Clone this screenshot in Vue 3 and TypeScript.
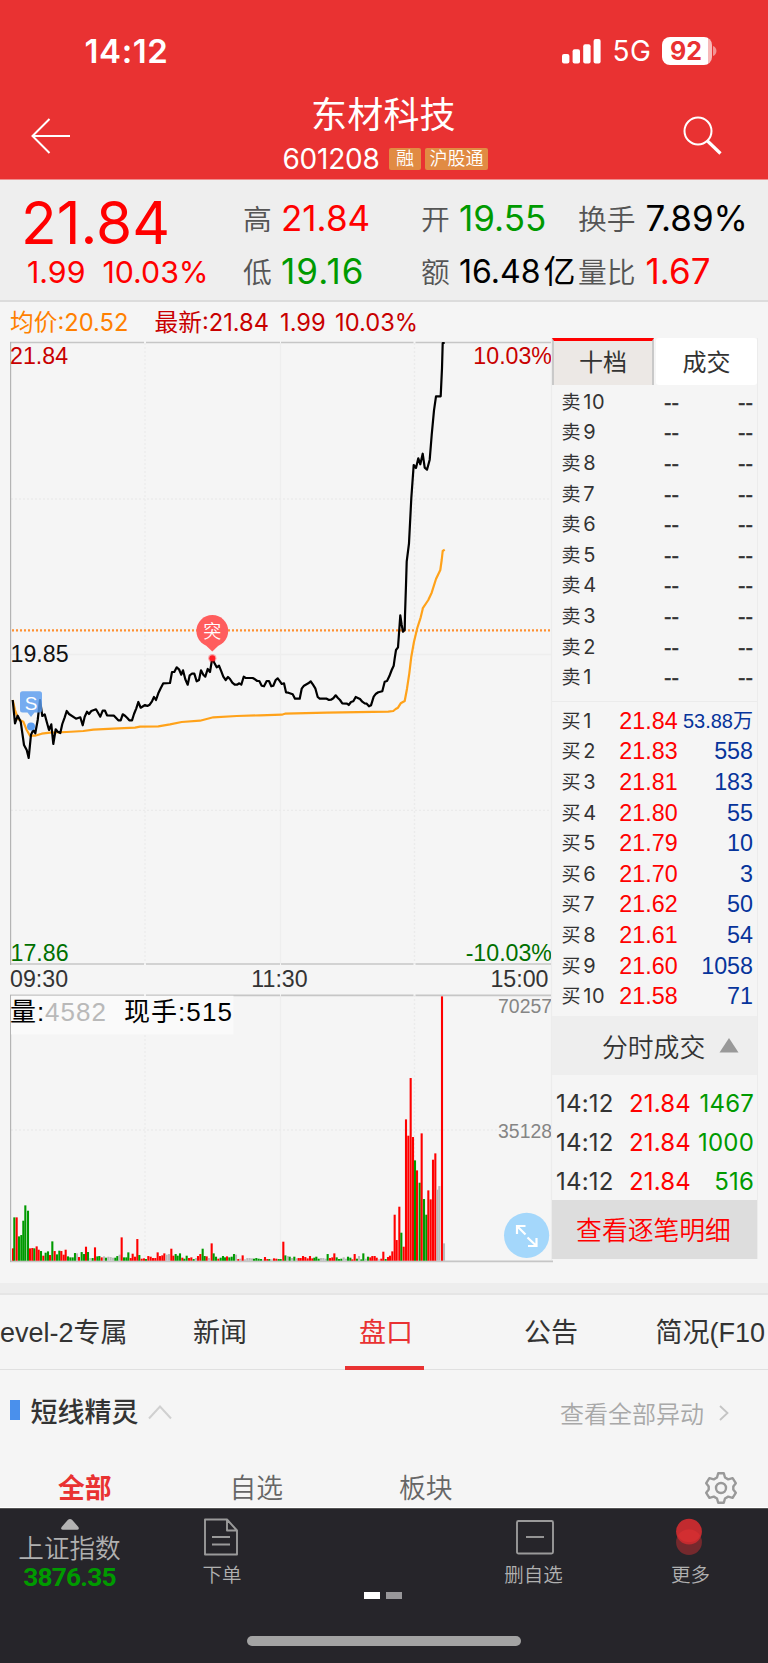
<script setup lang="ts">
interface Level { label: string; price: string; qty: string }
interface Bar { x: number; h: number; color: string }

const asks: Level[] = Array.from({ length: 10 }, (_, i) => ({ label: String(10 - i), price: '--', qty: '--' }))

const bids: Level[] = [
  ['21.84', '53.88万'], ['21.83', '558'], ['21.81', '183'], ['21.80', '55'], ['21.79', '10'],
  ['21.70', '3'], ['21.62', '50'], ['21.61', '54'], ['21.60', '1058'], ['21.58', '71'],
].map(([price, qty], i) => ({ label: String(i + 1), price, qty }))

const ticks = [
  { time: '14:12', price: '21.84', qty: '1467' },
  { time: '14:12', price: '21.84', qty: '1000' },
  { time: '14:12', price: '21.84', qty: '516' },
]

// Samples are stored in thirds of a pixel, relative to the origin of each session segment
function trace(originX: number, originY: number, samples: string): string {
  return samples
    .split(' ')
    .map(pair => {
      const [x, y] = pair.split(',').map(Number)
      return `${(originX + x / 3).toFixed(1)},${(originY + y / 3).toFixed(1)}`
    })
    .join(' ')
}

const priceLine = [
  trace(0, 600, '38,300 45,370 53,347 62,365 72,435 80,450 86,474 93,404 100,390 106,400 113,360 120,300 127,348 134,343 140,365 147,390 154,373 160,432 167,388 173,395 181,399 187,372 194,352 200,333 207,342 228,356 241,352 248,376 254,350 261,335 267,342 274,333 288,328 295,340 301,350 308,332 315,332 321,346 342,347 355,361 362,361 368,343 375,347 382,354 388,361 396,361 402,342 409,325 415,306 422,323 435,315 442,318 449,314 456,304 462,291 468,300 475,280 482,265 490,250 510,249 516,216 523,216 530,202 537,208 544,224 549,211 556,238 563,254 569,226 576,221 583,221 590,244 597,240 603,211 610,224 616,230 623,207 630,216 637,174 643,188 650,202 657,197 664,214 670,230 677,240 684,231 690,237 697,248 704,254 711,254 718,250 724,254 731,230 737,234 758,234 765,238 772,243 778,243 785,257 792,259 800,243 807,243 814,259 820,257 827,240 833,235'),
  trace(260, 600, '60,244 65,252 72,250 78,277 85,278 98,283 105,296 119,296 125,266 132,257 145,250 152,244 159,254 166,265 173,291 179,296 200,296 207,300 213,299 220,295 227,286 233,293 240,300 247,310 261,311 266,315 273,306 280,304 287,291 300,297 307,305 314,310 320,311 327,319 333,316 341,290 348,281 355,277 367,274 374,245 381,243 388,229 395,210 401,197 404,175 408,150 414,142 421,46 425,75 429,95 434,90'),
  trace(380, 335, '75,840 78,750 80,680 87,625 94,490 101,390 108,399 115,370 121,388 128,356 134,398 141,404 149,374 155,300 162,226 168,184 182,184 186,100 188,24 194,24'),
].join(' ')

const averageLine = [
  trace(0, 600, '38,300 45,330 55,358 70,365 80,390 90,407 105,407 125,401 150,398 200,396 250,393 280,389 340,386 405,383 420,380 475,379 510,373 545,366 600,362 640,352 710,348 780,346'),
  trace(260, 600, '0,346 65,344 75,341 200,338 385,335 400,333 407,327 414,323 422,310 434,303 441,266 448,220 454,170 462,125 472,84 482,52 488,27'),
  trace(380, 335, '128,820 145,795 155,773 168,732 181,705 185,675 188,648 194,644'),
].join(' ')

const palette: Record<string, string> = { r: '#ff0000', g: '#009a00', n: '#b9b9b9' }

function toBars(originX: number, data: string): Bar[] {
  return data.split(' ').map(item => {
    const [x, rest] = item.split(':')
    return { x: originX + Number(x) / 3, h: parseInt(rest) / 3, color: palette[rest.slice(-1)] }
  })
}

const bars: Bar[] = [
  ...toBars(0, '39:37r 43:130g 50:130r 57:73g 64:77g 70:120g 76:166g 84:150g 90:37r 97:38r 103:37g 110:43r 116:33r 123:29g 130:15r 137:24g 144:28g 150:17r 157:58g 164:29r 171:19g 178:30g 184:29r 191:18r 197:33r 204:13g 211:10g 218:10g 225:23g 231:22n 237:11r 245:26g 252:20g 258:42r 264:26g 271:8n 278:8g 285:40r 292:13g 298:14g 305:10r 312:13n 318:9g 325:12n 332:11n 339:9n 346:9g 352:14g 359:18n 365:70r 372:10g 379:10g 385:25g 392:8r 398:21r 405:12r 412:65r 418:17g 425:6r 432:7r 438:5g 445:14r 452:12r 459:8r 466:8r 473:25r 480:14r 487:16r 493:22r 500:18n 507:20n 514:36r 520:15r 527:20g 533:15g 540:22g 547:9r 553:6g 560:15g 567:8r 574:10r 581:5g 588:8n 594:14r 601:20r 608:36g 614:14g 620:13r 627:8n 635:52r 641:22g 648:12g 655:6r 662:9g 669:14g 675:10g 681:13r 688:10g 695:12g 702:20g 708:18n 715:5r 721:6n 728:16r 735:4n 742:8n 749:8n 756:7n 762:6g 769:8g 776:6g 783:5g 790:4n 795:11r 802:5r 808:5g 815:4n 822:7r 829:6r 836:5g'),
  ...toBars(270, '32:5g 40:57r 46:16g 53:14n 59:12g 66:8n 73:12g 80:7n 86:8r 92:8r 99:14r 106:11r 113:7r 120:14r 127:7r 133:9g 139:12g 146:6g 153:8n 160:8n 167:6n 173:20g 180:8r 187:10r 193:22r 200:10g 207:5g 214:6g 221:10n 228:6n 234:12g 241:9g 247:4r 254:20r 261:6g 267:14n 274:4g 280:22g 287:6n 294:12g 301:10r 307:14r 314:14r 320:9r 327:4n 334:6r 340:27r 347:5g 354:11r 360:15r 367:28r 374:138r 380:62r 388:162r 394:84g 401:42r 408:424r 415:375r 422:548r 429:371r 435:301g 441:271r 449:234g 455:382r 462:185g 469:138g 475:211r 482:184r 489:303r 496:322r 502:213n 508:224n 516:793r 522:52n'),
]
</script>

<template>
  <main class="app">
    <header class="top">
      <div class="status">
        <span class="clock">14:12</span>
        <svg class="signal" width="40" height="25" viewBox="0 0 40 25" fill="#fff">
          <rect x="0" y="15" width="7.4" height="9.4" rx="2" />
          <rect x="10.6" y="10.3" width="7.4" height="14.1" rx="2" />
          <rect x="21.2" y="5.2" width="7.4" height="19.2" rx="2" />
          <rect x="31.6" y="0" width="7" height="24.4" rx="2" />
        </svg>
        <span class="net">5G</span>
        <div class="battery"><span>92</span></div>
        <svg class="cap" width="4" height="10" viewBox="0 0 4 10"><path d="M0 0C4.6 1.4 4.6 8.6 0 10Z" fill="#f29494" /></svg>
      </div>
      <div class="nav">
        <svg width="42" height="38" viewBox="0 0 42 38" fill="none" stroke="#fff" stroke-width="2">
          <path d="M18.5 2L1.5 19L18.5 36M1.5 19H39" />
        </svg>
        <div class="title">
          <h1>东材科技</h1>
          <div class="code">
            <span class="num">601208</span>
            <span class="tag one">融</span>
            <span class="tag">沪股通</span>
          </div>
        </div>
        <svg class="search" width="40" height="40" viewBox="0 0 40 40" fill="none" stroke="#fff">
          <circle cx="15" cy="15" r="13.5" stroke-width="2" />
          <path d="M24.5 25L37.5 37.5" stroke-width="3.2" />
        </svg>
      </div>
    </header>

    <section class="quote">
      <div class="last">
        <div class="big">21.84</div>
        <div class="change"><span>1.99</span><span>10.03%</span></div>
      </div>
      <div class="pair hi">
        <p><label>高</label><b class="up">21.84</b></p>
        <p><label>低</label><b class="down wide">19.16</b></p>
      </div>
      <div class="pair open">
        <p><label>开</label><b class="down">19.55</b></p>
        <p><label>额</label><b class="amount">16.48<i>亿</i></b></p>
      </div>
      <div class="pair turn">
        <p><label>换手</label><b>7.89%</b></p>
        <p><label>量比</label><b class="up">1.67</b></p>
      </div>
    </section>

    <div class="legend">
      <span class="avg">均价:20.52</span>
      <span class="new">最新:21.84</span>
      <span class="new d">1.99</span>
      <span class="new">10.03%</span>
    </div>

    <section class="market">
      <svg class="chart" width="553" height="945" viewBox="0 338 553 945">
        <g stroke="#ebebeb" stroke-width="1.3" fill="none">
          <path d="M280.5 343V964M280.5 995V1260M551.5 343V1260M11 654.5H552" stroke="#eeeeee" />
          <path d="M145 343V964M414.5 343V964M145 995V1260M414.5 995V1260M11 499H552M11 810.3H552M11 1130H500" stroke-dasharray="2 2" />
        </g>
        <g stroke="#c6c6c6" stroke-width="1.7">
          <path d="M10 342.5H144M146 342.5H280M281 342.5H413.5M415.5 342.5H552" />
          <path d="M10 964H144M146 964H280M281 964H413.5M415.5 964H552" />
          <path d="M10 995.3H144M146 995.3H280M281 995.3H413.5M415.5 995.3H552M10 1261.3H553" />
          <path d="M10.6 342V965M10.6 995V1262" stroke="#b4b4b4" stroke-width="1.2" />
        </g>

        <rect x="11" y="995.8" width="222.5" height="38.6" fill="#fafafa" />
        <rect v-for="(bar, i) in bars" :key="i" :x="bar.x - 1.05" :y="1260.7 - bar.h" width="2.1" :height="bar.h" :fill="bar.color" />

        <path d="M12 630.3H550" stroke="#ff9030" stroke-width="2.3" stroke-dasharray="2 2" />
        <polyline :points="averageLine" fill="none" stroke="#ffa21a" stroke-width="2.2" stroke-linejoin="round" />
        <polyline :points="priceLine" fill="none" stroke="#000" stroke-width="2.2" stroke-linejoin="round" />

        <g class="marker">
          <path d="M22.5 691.3H39.5Q42 691.3 42 693.8V710Q42 712.5 39.5 712.5H34.5L31 717L27.5 712.5H22.5Q20 712.5 20 710V693.8Q20 691.3 22.5 691.3Z" fill="#5a9cef" fill-opacity=".82" />
          <circle cx="31" cy="726.5" r="4" fill="#5a9cef" />
          <text x="31" y="709.6" font-size="19" text-anchor="middle">S</text>
          <path d="M206 645.5L212.3 651.5L218.6 645.5Z" fill="#ff5d5d" />
          <circle cx="212.3" cy="631" r="15.9" fill="#ff5d5d" />
          <circle cx="212.3" cy="658.3" r="4.2" fill="#ff1d25" fill-opacity=".35" />
          <circle cx="212.3" cy="658.3" r="3" fill="#ff1d25" />
          <text x="212.3" y="637.8" class="tu" text-anchor="middle">突</text>
        </g>

        <g class="axis">
          <text x="10" y="363.5" class="red">21.84</text>
          <text x="552" y="364" class="red" text-anchor="end">10.03%</text>
          <text x="10.5" y="662">19.85</text>
          <text x="10.5" y="960.5" class="green">17.86</text>
          <text x="552" y="960.5" class="green" text-anchor="end">-10.03%</text>
          <text x="10" y="987.3" class="time">09:30</text>
          <text x="279.5" y="987.3" class="time" text-anchor="middle">11:30</text>
          <text x="548.5" y="987.3" class="time" text-anchor="end">15:00</text>
        </g>
        <g class="volume">
          <text x="10" y="1020.5">量:</text>
          <text x="45" y="1020.5" class="faint">4582</text>
          <text x="124" y="1020.5">现手:515</text>
        </g>
        <g class="scale">
          <text x="552" y="1013.3" text-anchor="end">70257</text>
          <text x="552" y="1137.6" text-anchor="end">35128</text>
        </g>

        <circle cx="526.6" cy="1235.3" r="22.6" fill="#a4d7fb" />
        <path d="M517 1234V1226H525.5M517.5 1226.5L525.5 1234.5M536.5 1238V1246H528M536 1245.5L527.5 1237.5" fill="none" stroke="#fff" stroke-width="2.2" />
      </svg>

      <aside class="book">
        <div class="switch"><span class="on">十档</span><span>成交</span></div>
        <ul class="asks">
          <li v-for="row in asks" :key="row.label"><span>卖<em>{{ row.label }}</em></span><s>{{ row.price }}</s><u>{{ row.qty }}</u></li>
        </ul>
        <ul class="bids">
          <li v-for="row in bids" :key="row.label">
            <span>买<em>{{ row.label }}</em></span><s>{{ row.price }}</s><u :class="{ small: row.qty.endsWith('万') }">{{ row.qty }}</u>
          </li>
        </ul>
        <div class="fold">分时成交<svg width="20" height="15" viewBox="0 0 20 15"><path d="M10 0L19.5 14.5H.5Z" fill="#999" /></svg></div>
        <ul class="ticks">
          <li v-for="(t, i) in ticks" :key="i"><span>{{ t.time }}</span><s>{{ t.price }}</s><u>{{ t.qty }}</u></li>
        </ul>
        <div class="detail">查看逐笔明细</div>
      </aside>
    </section>

    <div class="band"></div>
    <nav class="tabs">
      <span class="t1">evel-2专属</span>
      <span class="t2">新闻</span>
      <span class="t3 on">盘口</span>
      <span class="t4">公告</span>
      <span class="t5">简况(F10</span>
    </nav>

    <section class="genie">
      <div class="head">
        <i></i>
        <h2>短线精灵</h2>
        <svg width="24" height="15" viewBox="0 0 24 15" fill="none" stroke="#d0d0d0" stroke-width="2"><path d="M1 13.5L12 1.5L23 13.5" /></svg>
        <span class="all">查看全部异动</span>
        <svg class="chev" width="10" height="16" viewBox="0 0 10 16" fill="none" stroke="#c4c4c4" stroke-width="1.8"><path d="M1 1L8.5 8L1 15" /></svg>
      </div>
      <div class="filters">
        <span class="on">全部</span><span>自选</span><span>板块</span>
        <svg width="34" height="34" viewBox="0 0 34 34" fill="none" stroke="#999" stroke-width="2.4" stroke-linejoin="round">
          <path d="M14.2 2.2H19.8L21 6.5L24.2 8.4L28.6 7.2L31.8 12.2L29.3 15.4V18.6L31.8 21.8L28.6 26.8L24.2 25.6L21 27.5L19.8 31.8H14.2L13 27.5L9.8 25.6L5.4 26.8L2.2 21.8L4.7 18.6V15.4L2.2 12.2L5.4 7.2L9.8 8.4L13 6.5Z" />
          <circle cx="17" cy="17" r="5" />
        </svg>
      </div>
    </section>

    <footer class="bottom">
      <div class="actions">
        <div class="index">
          <svg width="18" height="11" viewBox="0 0 18 11"><path d="M7 .8Q9-.8 11 .8L17.4 8Q18.6 10.8 16 10.8H2Q-.6 10.8 .6 8Z" fill="#b3b3b3" /></svg>
          <span>上证指数</span>
          <b>3876.35</b>
        </div>
        <div class="act order">
          <svg width="36" height="38" viewBox="0 0 36 38" fill="none" stroke="#9a9a9a" stroke-width="1.9" stroke-linejoin="round">
            <path d="M2 1.5H24L34 12.5V36.5H2ZM24 1.5V12.5H34M9 19H27M9 26.5H27" />
          </svg>
          <span>下单</span>
        </div>
        <div class="act remove">
          <svg width="38" height="38" viewBox="0 0 38 38" fill="none" stroke="#9a9a9a" stroke-width="1.9">
            <rect x="1" y="3" width="36" height="32.5" rx="1.5" /><path d="M10 19H28" />
          </svg>
          <span>删自选</span>
        </div>
        <div class="act more">
          <svg width="28" height="38" viewBox="0 0 28 38">
            <circle cx="14" cy="24.2" r="12.9" fill="#75292d" />
            <circle cx="14" cy="13.6" r="12.9" fill="#c22b2f" />
            <path d="M2.8 17.8A12.9 12.9 0 0 1 25.2 17.8A12.9 12.9 0 0 1 2.8 17.8Z" fill="#d22e31" />
          </svg>
          <span>更多</span>
        </div>
      </div>
      <div class="pages"><i class="on"></i><i></i></div>
      <div class="home"></div>
    </footer>
  </main>
</template>

<style>
body { background: #f5f5f5; }
</style>

<style scoped>
.app {
  width: 768px; height: 1663px; overflow: hidden; background: #f5f5f5; color: #333;
  font-family: Inter, "Noto Sans CJK SC", sans-serif; display: flex; flex-direction: column;
}
.app * { box-sizing: border-box; }
h1, h2, p, ul { margin: 0; padding: 0; font-weight: 400; }
ul { list-style: none; }
b, i, em { font-style: normal; font-weight: 400; }
s, u { text-decoration: none; }
span, b, label { white-space: nowrap; }
svg { display: block; flex: none; }

.top { height: 180px; flex: none; background: #e93232; border-bottom: 1px solid #ee8f8f; color: #fff; display: flex; flex-direction: column; }
.status { height: 92px; padding: 10px 0 0 84.5px; display: flex; align-items: center; flex: none; }
.clock { font-weight: 600; font-size: 33px; letter-spacing: .6px; width: 477px; }
.net { font-size: 28px; letter-spacing: .6px; padding-left: 11px; width: 60.5px; }
.battery { width: 50px; height: 28px; border-radius: 8px; background: linear-gradient(90deg, #fff 46px, #f7b9b9 46px); color: #e93232; font-weight: 700; font-size: 25px; line-height: 28px; padding-left: 8px; }
.cap { margin-left: 1px; }
.nav { display: flex; padding: 0 45px 0 31px; }
.nav > svg { margin-top: 25px; }
.search { margin-left: auto; }
.nav > svg.search { margin-top: 24px; }
.title { margin-left: 209.5px; display: flex; flex-direction: column; }
h1 { font-size: 36px; line-height: 47px; margin-left: 28.5px; font-weight: 370; letter-spacing: .2px; }
.code { display: flex; align-items: center; height: 40px; }
.num { font-size: 28px; line-height: 34px; width: 106.5px; letter-spacing: -.25px; margin-top: -1px; }
.tag { background: #e18b43; border-radius: 2px; font-size: 18px; line-height: 21px; height: 22px; padding: 0 4.5px; margin-right: 4px; font-weight: 350; }
.tag.one { padding: 0 7px; }

.quote { height: 122px; flex: none; background: #eeeeee; border-bottom: 2px solid #dcdcdc; display: flex; color: #000; padding-left: 22px; }
.last { width: 221px; color: #ff0000; padding-top: 12px; }
.big { font-size: 58.5px; line-height: 62px; margin-left: -1px; }
.change { font-size: 30.3px; line-height: 36px; margin-left: 5px; display: flex; gap: 17px; }
.pair p { display: flex; height: 53px; line-height: 53px; font-size: 35px; }
.pair { padding-top: 11.5px; }
.hi { width: 178px; } .open { width: 157px; }
.pair label { font-size: 28.8px; color: #555; font-weight: 350; width: 38px; padding-top: 1.5px; }
.turn label { width: 67.5px; }
.up { color: #ff0000; } .down { color: #009a00; }
.wide { letter-spacing: 1.1px; }
.amount { font-size: 32px; } .amount i { font-size: 32px; margin-left: 3px; font-weight: 370; }

.legend { height: 36px; flex: none; padding: 4px 0 0 10px; display: flex; font-size: 23.7px; line-height: 34px; color: #c80000; }
.avg { color: #ff8000; width: 144.5px; } .legend .new { width: 125.5px; } .legend .new.d { width: 55px; }

.market { height: 945px; flex: none; display: flex; }
.chart { margin-right: -2px; }
.marker text { fill: #fff; font-family: "Liberation Sans", "Noto Sans CJK SC", sans-serif; }
.marker .tu { font-size: 18px; font-weight: 350; }
.axis text { font: 23.2px "Liberation Sans", sans-serif; fill: #111; }
.axis .red { fill: #c80000; } .axis .green { fill: #007000; } .axis .time { fill: #333; }
.volume text { font: 370 26px "Liberation Sans", "Noto Sans CJK SC", sans-serif; fill: #000; letter-spacing: 1.05px; }
.volume .faint { fill: #b9b9b9; }
.scale text { font: 19.4px "Liberation Sans", sans-serif; fill: #858585; }

.book { width: 207px; height: 921px; border: 1px solid #ececec; border-width: 0 1px; display: flex; flex-direction: column; }
.switch { height: 47px; display: flex; gap: 2px; text-align: center; font-size: 24px; line-height: 50px; flex: none; }
.switch span { width: 101px; background: #fff; border-radius: 3px; }
.switch .on { width: 102px; background: #ece8e5; border: 2px solid #c9c9c9; border-width: 3px 2px 0; border-top-color: #ff0000; border-radius: 0; line-height: 44px; }
li { display: flex; align-items: center; }
.asks { height: 317px; flex: none; border-bottom: 1px solid #ebebeb; }
.asks li, .bids li { height: 30.6px; padding: 0 4px 0 9.5px; }
.asks li span, .bids li span { width: 58px; font-size: 19px; letter-spacing: 2.8px; font-weight: 370; }
em { font-size: 20px; letter-spacing: .5px; }
s { margin-left: auto; } u { width: 74px; text-align: right; }
.asks s, .asks u { font: 22.5px/24px "Liberation Sans", sans-serif; padding-top: 5px; -webkit-text-stroke: .35px #333; }
.bids { height: 314px; flex: none; padding-top: 2px; }
.bids s, .bids u { font: 23.3px/28px "Liberation Sans", "Noto Sans CJK SC", sans-serif; padding-top: 3px; }
.bids s { margin-right: 2px; }
.bids s, .ticks s { color: #ff0000; }
.bids u { color: #07349b; width: 73.5px; }
.bids u.small { font-size: 20px; padding-top: 4px; }
.fold { height: 59px; background: #eeeeee; display: flex; align-items: center; padding-left: 50px; gap: 13.5px; font-size: 25.8px; font-weight: 350; flex: none; }
.fold svg { margin-top: -1px; }
.ticks { height: 125px; padding-top: 8.5px; flex: none; }
.ticks li { height: 39.3px; padding: 0 3px 0 4px; font-size: 24px; letter-spacing: .2px; }
.ticks u { color: #009a00; width: 63px; }
.detail { height: 59px; flex: none; background: #dddddd; color: #ff0000; font-size: 25.8px; text-align: center; line-height: 61px; font-weight: 350; padding-right: 2px; }

.band { height: 12px; flex: none; background: #ededed; border-bottom: 2px solid #e5e5e5; }
.tabs { height: 75px; flex: none; border-bottom: 1px solid #e0e0e0; display: flex; font-size: 27px; line-height: 77px; font-weight: 370; font-family: "Liberation Sans", "Noto Sans CJK SC", sans-serif; }
.tabs span { flex: none; }
.t1 { width: 193px; } .t2 { width: 152px; } .t3 { width: 80px; }
.tabs .on { color: #e93232; border-bottom: 4px solid #e93232; text-align: center; margin: 0 100px 0 0; width: 79px; height: 75px; padding-left: 3px; }
.t4 { width: 131.5px; }

.genie { height: 138px; flex: none; border-bottom: 1px solid #fff; }
.head { display: flex; align-items: center; height: 85px; padding-left: 10px; }
.head i { width: 10px; height: 20px; background: #4a90ec; margin-top: -5px; }
h2 { font-size: 27px; font-weight: 500; margin: 0 9.5px 0 10.5px; line-height: 40px; }
.all { margin-left: auto; font-size: 24px; color: #a8a8a8; font-weight: 350; margin-top: -1px; }
.chev { margin: 1px 39px 0 15px; }
.filters { display: flex; align-items: center; height: 40px; margin-top: 13px; font-size: 26.8px; color: #666; padding-left: 58px; font-weight: 350; line-height: 36px; }
.filters span { width: 171.5px; margin-top: -1px; } .filters span + span { width: 169.5px; }
.filters .on { color: #e93232; font-weight: 700; }
.filters svg { margin-left: 135px; }

.bottom { height: 155px; flex: none; background: #26252a; border-top: 1px solid #555; color: #b0b0b0; display: flex; flex-direction: column; align-items: center; }
.actions { height: 83px; width: 768px; display: flex; flex: none; }
.index { width: 139px; display: flex; flex-direction: column; align-items: center; padding-top: 10px; }
.index span { font-size: 25.6px; line-height: 38px; font-weight: 350; }
.index b { font: 700 26.3px/36px Roboto, sans-serif; color: #009a00; letter-spacing: -.8px; margin-top: -9px; }
.act { display: flex; flex-direction: column; align-items: center; padding-top: 9px; width: 80px; }
.act span { font-size: 19.5px; line-height: 38px; font-weight: 350; }
.order { margin-left: 43px; } .remove { margin-left: 231.5px; } .more { margin-left: 76.5px; }
.order svg { margin-right: 3px; } .remove svg { margin-left: 3px; } .more svg { margin-right: 3px; }
.more span { padding-left: 1px; }
.pages { display: flex; gap: 6px; margin-right: 2px; } .pages i { width: 16px; height: 7px; background: #98979a; } .pages i.on { background: #fff; }
.home { width: 274px; height: 10px; border-radius: 5px; background: #a3a3a3; margin-top: 37px; }
</style>
